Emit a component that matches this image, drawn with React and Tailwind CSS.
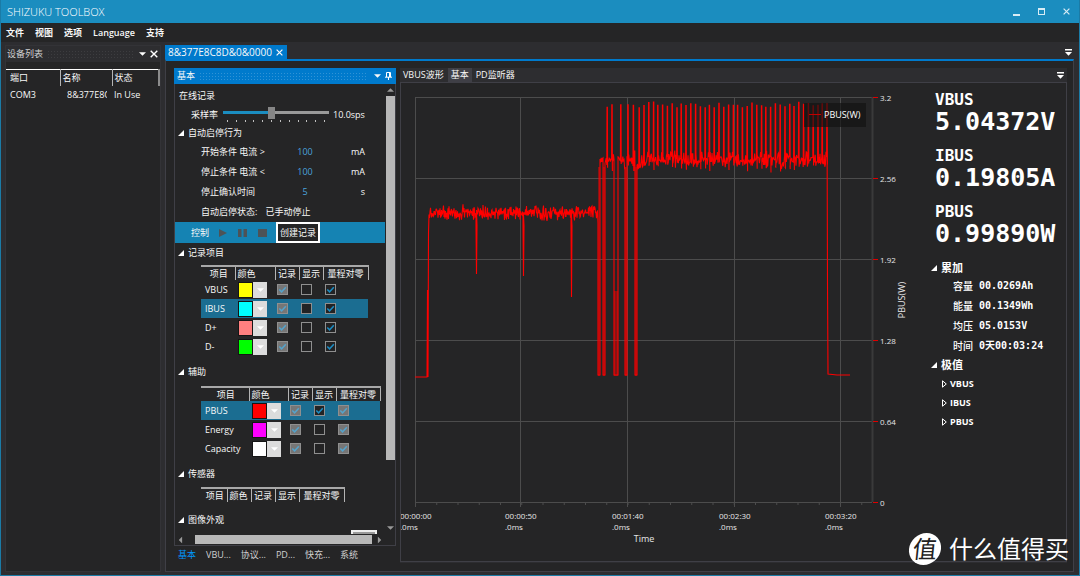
import React, { useState } from 'react';
import clsx from 'clsx';

const GRIP = 'bg-[radial-gradient(circle,#ffffff30_25%,transparent_30%)] bg-size-[3px_3px]';

const MENU = ['文件', '视图', '选项', 'Language', '支持'];

const RECORD_ROWS = [
  { name: 'VBUS', color: '#ffff00', show: false, zero: true },
  { name: 'IBUS', color: '#00ffff', show: false, zero: true, selected: true },
  { name: 'D+', color: '#ff8080', show: false, zero: true },
  { name: 'D-', color: '#00ff00', show: false, zero: true },
];

const AUX_ROWS = [
  { name: 'PBUS', color: '#ff0000', show: true, zero: true, selected: true },
  { name: 'Energy', color: '#ff00ff', show: false, zero: true },
  { name: 'Capacity', color: '#ffffff', show: false, zero: true },
];

const READINGS = [
  { label: 'VBUS', value: '5.04372V' },
  { label: 'IBUS', value: '0.19805A' },
  { label: 'PBUS', value: '0.99890W' },
];

const TOTALS = [
  ['容量', '00.0269Ah'],
  ['能量', '00.1349Wh'],
  ['均压', '05.0153V'],
  ['时间', '0天00:03:24'],
];

const DOCK_TABS = ['基本', 'VBU...', '协议...', 'PD...', '快充...', '系统'];

const ArrowDown = ({ className }) => (
  <svg viewBox="0 0 8 4" className={clsx('w-[7px] h-1 fill-current', className)}>
    <path d="M0 0H8L4 4Z" />
  </svg>
);

const Overflow = () => (
  <button aria-label="More tabs">
    <svg viewBox="0 0 7 7" className="w-[7px] h-[7px] fill-white">
      <path d="M0 0H7V1.6H0ZM0 3H7L3.5 6.8Z" />
    </svg>
  </button>
);

const Cross = ({ className }) => (
  <svg viewBox="0 0 8 8" className={clsx('w-2 h-2 stroke-current', className)} fill="none" strokeWidth="1.4">
    <path d="M0.7 0.7L7.3 7.3M7.3 0.7L0.7 7.3" />
  </svg>
);

const Expander = ({ className }) => (
  <svg viewBox="0 0 6 6" className={clsx('w-[6px] h-[6px] fill-white', className)}>
    <path d="M6 0V6H0Z" />
  </svg>
);

const Check = ({ label, defaultChecked, disabled }) => (
  <span className="relative block w-[11px] h-[11px]">
    <input
      type="checkbox"
      aria-label={label}
      defaultChecked={defaultChecked}
      disabled={disabled}
      className="peer block appearance-none w-[11px] h-[11px] border border-[#8f8f8f] bg-[#232324] disabled:bg-[#767676]"
    />
    <svg
      viewBox="0 0 11 11"
      className={clsx(
        'absolute inset-0 w-[11px] h-[11px] hidden peer-checked:block pointer-events-none',
        disabled ? 'stroke-[#55a3cb]' : 'stroke-[#1b8dc4]'
      )}
      fill="none"
      strokeWidth="1.5"
    >
      <path d="M2.3 5.4L4.6 7.8L8.8 3.2" />
    </svg>
  </span>
);

const Swatch = ({ name, color }) => (
  <button aria-label={`${name} 颜色`} className="flex h-4 w-[29px]">
    <span className="w-[15px] h-full border border-[#151515]" style={{ backgroundColor: color }} />
    <span className="flex-1 h-full bg-[#dcdcdc] text-white flex items-center justify-center">
      <ArrowDown />
    </span>
  </button>
);

const HEADERS = ['项目', '颜色', '记录', '显示', '量程对零'];

const ChannelTable = ({ rows, widths, lockZero, className }) => (
  <table className={clsx('ml-[26px] table-fixed border-collapse', className)}>
    <colgroup>
      {widths.map((w, i) => (
        <col key={i} style={{ width: w }} />
      ))}
    </colgroup>
    <thead>
      <tr className="h-[14px] border-t-2 border-[#a8a8a8]">
        {HEADERS.map((h, i) => (
          <th
            key={h}
            className={clsx(
              'p-0 font-normal leading-3 whitespace-nowrap border-r border-[#b4b4b4]',
              i === 1 ? 'text-left pl-[2px]' : 'text-center',
              i === 0 && 'pl-[2px]'
            )}
          >
            {h}
          </th>
        ))}
      </tr>
    </thead>
    <tbody>
      {rows.map(row => (
        <tr key={row.name} className={clsx('h-[19px]', row.selected && 'bg-[#1b6d91]')}>
          <td className="p-0 pl-1">{row.name}</td>
          <td className="p-0 pl-[3px]"><Swatch name={row.name} color={row.color} /></td>
          <td className="p-0 pl-[2px]"><Check label={`${row.name} 记录`} defaultChecked disabled /></td>
          <td className="p-0 pl-[2px]"><Check label={`${row.name} 显示`} defaultChecked={row.show} /></td>
          <td className="p-0 pl-[2px]">
            <Check label={`${row.name} 量程对零`} defaultChecked={row.zero} disabled={lockZero} />
          </td>
        </tr>
      ))}
    </tbody>
  </table>
);

const Section = ({ title, className }) => (
  <div className={clsx('flex items-center gap-1 pl-[3px]', className)}>
    <Expander />
    <span>{title}</span>
  </div>
);

const Condition = ({ id, label, value, unit }) => (
  <div className="flex items-center h-5 pl-[26px] pr-5">
    <label htmlFor={id} className="w-[84px]">{label}</label>
    <input
      id={id}
      defaultValue={value}
      className="w-10 bg-transparent text-center text-[#4ba3dd] outline-none"
    />
    <span className="flex-1 text-right">{unit}</span>
  </div>
);

const DeviceList = () => (
  <aside className="w-[156px] shrink-0 flex flex-col bg-[#252526] border border-[#333337]">
    <div className="flex items-center h-4 pl-px pr-[2px] bg-[#2d2d30] text-[#d0d0d0]">
      <span>设备列表</span>
      <span className={clsx('flex-1 h-2 mx-1 opacity-40', GRIP)} />
      <button aria-label="Menu" className="mr-1 text-white"><ArrowDown /></button>
      <button aria-label="Close" className="text-white"><Cross /></button>
    </div>
    <table className="mt-[7px] table-fixed w-full border-collapse">
      <colgroup>
        <col className="w-[54px]" />
        <col className="w-[52px]" />
        <col />
      </colgroup>
      <thead>
        <tr className="h-4 border-t border-white text-left">
          <th className="p-0 pl-1 font-normal border-r border-[#b4b4b4]">端口</th>
          <th className="p-0 pl-[2px] font-normal border-r border-[#b4b4b4]">名称</th>
          <th className="p-0 pl-[2px] font-normal border-r-2 border-[#8c8c8c]">状态</th>
        </tr>
      </thead>
      <tbody>
        <tr className="h-[18px]">
          <td className="p-0 pl-1">COM3</td>
          <td className="p-0 pl-[7px]">
            <div className="overflow-hidden whitespace-nowrap w-10">8&377E8C</div>
          </td>
          <td className="p-0 pl-[2px]">In Use</td>
        </tr>
      </tbody>
    </table>
  </aside>
);

const BasicDock = () => {
  const [rate, setRate] = useState(45);
  return (
    <section className="w-[222px] shrink-0 flex flex-col">
      <div className="flex items-center h-4 px-[3px] bg-[#007acc]">
        <span>基本</span>
        <span className={clsx('flex-1 h-2 mx-1', GRIP)} />
        <button aria-label="Menu" className="mx-1"><ArrowDown /></button>
        <button aria-label="Pin" className="mr-px">
          <svg viewBox="0 0 7 8" className="w-[7px] h-2 stroke-white" fill="none">
            <path d="M1.5 5V0.5H5.5V5M4.5 0.5V5M0 5.2H7M3.5 5V8" />
          </svg>
        </button>
      </div>

      <div className="flex-1 min-h-0 flex bg-[#252526] border-x border-[#3f3f46]">
        <div className="flex-1 min-w-0 overflow-hidden">
          <div className="flex items-center h-[18px] mt-[3px] pl-1">在线记录</div>
          <div className="flex items-center h-[19px] pl-4">
            <label htmlFor="rate" className="w-8">采样率</label>
            <div className="relative w-[106px] h-[19px]">
              <input
                id="rate"
                type="range"
                value={rate}
                onChange={e => setRate(Number(e.target.value))}
                style={{ backgroundImage: `linear-gradient(to right, #1b8dc0 ${rate}%, #999 ${rate}%)` }}
                className="block appearance-none w-full h-[3px] mt-[6px] [&::-webkit-slider-thumb]:appearance-none [&::-webkit-slider-thumb]:w-[7px] [&::-webkit-slider-thumb]:h-3 [&::-webkit-slider-thumb]:bg-[#868686]"
              />
              <div className="flex justify-between mt-[6px] px-1">
                {Array.from({ length: 12 }, (_, i) => (
                  <span key={i} className="w-px h-[2px] bg-[#c0c0c0]" />
                ))}
              </div>
            </div>
            <span className="ml-1">10.0sps</span>
          </div>

          <Section title="自动启停行为" className="h-[18px]" />
          <Condition id="start" label="开始条件 电流 >" value="100" unit="mA" />
          <Condition id="stop" label="停止条件 电流 <" value="100" unit="mA" />
          <Condition id="confirm" label="停止确认时间" value="5" unit="s" />
          <div className="flex items-center h-5 pl-[26px] gap-2">
            <span>自动启停状态:</span>
            <span>已手动停止</span>
          </div>

          <div className="flex items-center h-[21px] pl-4 bg-[#1583b3]">
            <span className="w-7">控制</span>
            <div className="flex gap-[11px] text-[#4d5357]">
              <button aria-label="Start">
                <svg viewBox="0 0 8 8" className="w-2 h-2 fill-current"><path d="M0 0L8 4L0 8Z" /></svg>
              </button>
              <button aria-label="Pause">
                <svg viewBox="0 0 9 8" className="w-[9px] h-2 fill-current"><path d="M0 0H3.5V8H0ZM5.5 0H9V8H5.5Z" /></svg>
              </button>
              <button aria-label="Stop">
                <svg viewBox="0 0 9 8" className="w-[9px] h-2 fill-current"><path d="M0 0H9V8H0Z" /></svg>
              </button>
            </div>
            <button className="ml-[9px] h-[21px] w-[44px] border-2 border-white bg-[#252526] whitespace-nowrap leading-3">
              创建记录
            </button>
          </div>

          <Section title="记录项目" className="h-5" />
          <ChannelTable rows={RECORD_ROWS} widths={[34, 40, 24, 24, 45]} className="w-[167px] mt-[2px]" />

          <Section title="辅助" className="h-5 mt-[6px]" />
          <ChannelTable rows={AUX_ROWS} widths={[48, 39, 24, 24, 44]} lockZero className="w-[179px] mt-1" />

          <Section title="传感器" className="h-5 mt-[6px]" />
          <ChannelTable rows={[]} widths={[26, 24, 24, 24, 45]} className="w-[143px] mt-[3px]" />

          <Section title="图像外观" className="h-5 mt-2" />
        </div>

        {/* Vertical scroll bar */}
        <div className="w-[10px] shrink-0 flex flex-col items-center text-[#999] pt-1 pb-1">
          <ArrowDown className="rotate-180" />
          <div className="mt-1 w-[9px] h-[364px] bg-[#b8b8b8]" />
          <span className="flex-1" />
          <ArrowDown />
        </div>
      </div>

      <div className="relative h-3 flex items-center pl-[2px] pr-3 bg-[#252526] border-x border-b border-[#3f3f46] text-[#999]">
        <span className="absolute right-[18px] -top-1 w-[26px] h-1 border-2 border-b-0 border-[#eee] bg-[#999]" />
        <ArrowDown className="rotate-90" />
        <div className="ml-[11px] mr-1 flex-1 h-[9px] bg-[#b8b8b8]" />
        <ArrowDown className="-rotate-90" />
      </div>

      <div className="flex h-[17px] text-[#d0d0d0]">
        {DOCK_TABS.map((tab, i) => (
          <button
            key={tab}
            className={clsx('pl-1 pr-[6px] leading-4', i === 0 && 'bg-[#252526] text-[#0097fb]')}
          >
            {tab}
          </button>
        ))}
      </div>
    </section>
  );
};

// Deterministic noise so that the trace is the same on every render
const noiseSource = seed => () => {
  seed = (seed * 1664525 + 1013904223) % 4294967296;
  return seed / 4294967296 - 0.5;
};

const buildTrace = () => {
  const noise = noiseSource(7);
  const wobble = size => (noise() + noise()) * size;
  const pts = [[14, 294], [26, 294], [26.5, 207], [27, 294], [27.5, 150]];
  const dips = { 75: 191, 122: 193, 170: 214 };
  for (let x = 28; x < 197; x += 0.5) {
    pts.push([x, 130 + wobble(9)]);
    if (dips[x]) pts.push([x, 144], [x + 0.5, dips[x]], [x + 1, 143]);
  }
  pts.push([197, 140], [197, 292], [199, 292]);

  const gaps = [[202, 204], [213, 217], [224, 226], [234, 236]];
  const spikes = [205.5, 210.5, 219, 226.5, 231.5];
  for (let s = 237.5; s < 426; s += 4.7) spikes.push(s);
  let next = 0;
  let gap = 0;
  for (let x = 199; x < 426; x += 0.6) {
    if (gaps[gap] && x >= gaps[gap][0]) {
      const [from, to] = gaps[gap];
      pts.push([from, 85], [from, 292], [to, 292], [to, 82]);
      x = to;
      gap += 1;
    }
    pts.push([x, 77 + wobble(10)]);
    if (next < spikes.length && x >= spikes[next]) {
      const top = 22 + noise() * 6;
      pts.push([x, 74], [x + 0.2, top], [x + 0.6, top], [x + 0.8, 84 + noise() * 12]);
      next += 1;
    }
  }
  pts.push([426, 22], [426.5, 200], [427, 291], [436, 292], [449, 292]);
  return pts.map(([x, y]) => `${x.toFixed(1)},${y.toFixed(1)}`).join(' ');
};

const TRACE = buildTrace();
const X_TICKS = [
  { x: 14, label: '00:00:00' },
  { x: 119, label: '00:00:50' },
  { x: 226, label: '00:01:40' },
  { x: 333, label: '00:02:30' },
  { x: 439, label: '00:03:20' },
];
const Y_TICKS = ['3.2', '2.56', '1.92', '1.28', '0.64', '0'];
const MINOR = Array.from({ length: 22 }, (_, i) => 14 + i * 21.25);

const Chart = () => (
  <svg
    viewBox="0 0 524 478"
    preserveAspectRatio="xMinYMin meet"
    className="flex-1 min-w-0 h-full"
    fontSize="9"
    fill="#e6e6e6"
  >
    <g stroke="#4c4c4c">
      {X_TICKS.map(t => (
        <path key={t.x} d={`M${t.x + 0.5} 14V424`} />
      ))}
      {Y_TICKS.map((t, i) => (
        <path key={t} d={`M14 ${14.5 + i * 81}H471`} />
      ))}
      {MINOR.map(x => (
        <path key={x} d={`M${x + 0.5} 419V422`} />
      ))}
      <path d="M471.5 14V419" stroke="#3a3a3a" strokeWidth="2" />
    </g>

    <polyline points={TRACE} fill="none" stroke="#f00" strokeWidth="1.1" />
    <g fill="#f00" opacity="0.45">
      <path d="M197 84H199V293H197ZM202 84H204V293H202ZM213 208H217V293H213ZM224 84H226V293H224ZM234 84H236V293H234Z" />
    </g>

    <rect x="403" y="20" width="62" height="24" fill="#111" fillOpacity="0.65" />
    <path d="M408 31.5H420" stroke="#c00000" />
    <text x="423" y="35" fill="#fff">PBUS(W)</text>

    {Y_TICKS.map((t, i) => (
      <g key={t}>
        <path d={`M472 ${14.5 + i * 81}H477`} stroke="#e00000" />
        <text x="479" y={18 + i * 81} fontSize="8">{t}</text>
      </g>
    ))}
    {X_TICKS.map(t => (
      <g key={t.label} fontSize="8">
        <text x={t.x - 15} y="436">{t.label}</text>
        <text x={t.x - 15} y="447">.0ms</text>
      </g>
    ))}
    <text x="243" y="459" textAnchor="middle">Time</text>
    <text transform="translate(504 217) rotate(-90)" textAnchor="middle">PBUS(W)</text>
  </svg>
);

const Readout = () => (
  <div className="w-[141px] shrink-0 pl-[10px] pt-[9px] text-white font-bold">
    <div className="font-['DejaVu_Sans_Mono','Noto_Sans_CJK_SC',monospace]">
      {READINGS.map(r => (
        <div key={r.label} className="h-14">
          <div className="text-[16px] leading-4">{r.label}</div>
          <div className="text-[25px] leading-7">{r.value}</div>
        </div>
      ))}
    </div>
    <div className="flex items-center gap-1 h-4 text-[11px] -ml-1"><Expander />累加</div>
    <dl className="pl-[18px] text-[10px]">
      {TOTALS.map(([name, value]) => (
        <div key={name} className="flex items-center gap-[6px] h-5">
          <dt className="font-medium">{name}</dt>
          <dd className="font-['DejaVu_Sans_Mono','Noto_Sans_CJK_SC',monospace]">{value}</dd>
        </div>
      ))}
    </dl>
    <div className="flex items-center gap-1 h-[18px] text-[11px] -ml-1"><Expander />极值</div>
    {READINGS.map(r => (
      <div key={r.label} className="flex items-center gap-[3px] h-[19px] pl-[7px] text-[9px]">
        <svg viewBox="0 0 5 8" className="w-[5px] h-2 stroke-white" fill="none">
          <path d="M0.5 0.8V7.2L4.3 4Z" />
        </svg>
        {r.label}
      </div>
    ))}
  </div>
);

const Brand = () => (
  <div className="absolute right-[10px] bottom-[10px] flex items-center gap-2 text-white">
    <span className="w-8 h-8 rounded-full bg-white text-[#222] text-[24px] leading-8 text-center -skew-x-6">
      值
    </span>
    <span className="text-[24px] leading-8">什么值得买</span>
  </div>
);

const App = () => (
  <div
    lang="zh-CN"
    className="relative h-screen flex flex-col overflow-hidden bg-[#2d2d30] border-x border-b border-[#1b7ba6] text-[9px] leading-3 text-[#f8f8f8] font-['Open_Sans','Noto_Sans_CJK_SC',sans-serif]"
  >
    <header className="flex items-center justify-between h-[23px] shrink-0 pl-[7px] pr-[10px] bg-[#1b8dbf] -mx-px">
      <h1 className="text-[11px] leading-4 font-light text-white">SHIZUKU TOOLBOX</h1>
      <div className="flex items-center gap-[18px] text-[#d8ecf5]">
        <button aria-label="Minimize" className="h-2 flex items-end">
          <span className="block w-[7px] h-[2px] bg-current" />
        </button>
        <button aria-label="Maximize" className="w-[7px] h-[7px] border border-t-2 border-current" />
        <button aria-label="Close"><Cross className="w-[7px] h-[7px]" /></button>
      </div>
    </header>

    <nav className="flex items-center h-[19px] shrink-0 pl-[5px] gap-[11px] bg-[#252526]">
      {MENU.map(item => (
        <button key={item} className="font-semibold">{item}</button>
      ))}
    </nav>

    <div className="flex-1 min-h-0 flex gap-1 pt-[3px] pb-[3px] pl-1 pr-[5px]">
      <DeviceList />

      <main className="flex-1 min-w-0 flex flex-col">
        <div className="flex justify-between items-center h-[14px] pr-[2px]">
          <button className="flex items-center h-full gap-1 pl-[3px] pr-1 bg-[#007acc] text-[10px] leading-3">
            8&377E8C8D&0&0000
            <Cross className="w-[7px] h-[7px]" />
          </button>
          <Overflow />
        </div>

        <div className="flex-1 min-h-0 flex gap-1 pl-2 pr-[6px] pt-[7px] pb-2 border-t-2 border-t-[#007acc] border-x border-b border-[#3f3f46] bg-[#252526]">
          <BasicDock />

          <section className="flex-1 min-w-0 flex flex-col pb-px bg-[#2d2d30]">
            <div className="flex items-center h-[14px] pr-[3px]">
              <button className="pl-[3px] pr-1">VBUS波形</button>
              <button className="px-[3px] h-full bg-[#3f3f46]">基本</button>
              <button className="px-1 flex-1 text-left">PD监听器</button>
              <Overflow />
            </div>
            <div className="flex-1 min-h-0 flex bg-[#252526] border border-[#3f3f46]">
              <Chart />
              <Readout />
            </div>
          </section>
        </div>
      </main>
    </div>

    <Brand />
  </div>
);

export default App;
